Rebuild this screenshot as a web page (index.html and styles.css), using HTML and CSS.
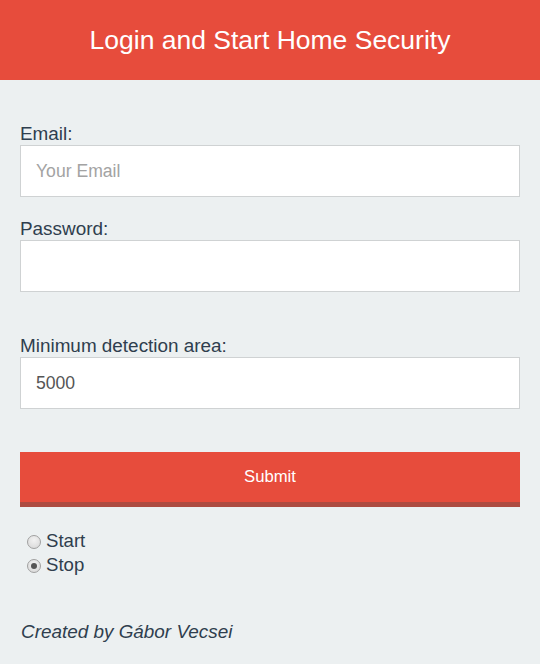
FILE: index.html
```html
<!DOCTYPE html>
<html lang="en">
<head>
<meta charset="utf-8">
<title>Login and Start Home Security</title>
<link rel="stylesheet" href="styles.css">
</head>
<body>
<header class="topbar">
  <h1 class="title">Login and Start Home Security</h1>
</header>
<main class="content">
  <form class="login-form">
    <label class="field-label" for="email">Email:</label>
    <input class="text-input gap-small" id="email" type="email" placeholder="Your Email">
    <label class="field-label" for="password">Password:</label>
    <input class="text-input gap-large" id="password" type="password">
    <label class="field-label" for="area">Minimum detection area:</label>
    <input class="text-input gap-large" id="area" type="text" value="5000">
    <button class="submit" type="button">Submit</button>
    <div class="radios">
      <label class="radio-row"><input class="radio" type="radio" name="mode" value="start"><span>Start</span></label>
      <label class="radio-row"><input class="radio" type="radio" name="mode" value="stop" checked><span>Stop</span></label>
    </div>
  </form>
  <p class="credit">Created by Gábor Vecsei</p>
</main>
</body>
</html>
```
FILE: styles.css
```css
html, body {
  margin: 0;
  padding: 0;
}
body {
  background: #ecf0f1;
  font-family: "Liberation Sans", Arial, sans-serif;
  color: #2f3e4e;
}
.topbar {
  background: #e74c3c;
  height: 80px;
  display: flex;
  align-items: center;
  justify-content: center;
}
.title {
  margin: 0;
  font-weight: normal;
  font-size: 26.5px;
  color: #ffffff;
}
.content {
  padding: 43px 20px 0;
}
.login-form {
  display: flex;
  flex-direction: column;
}
.field-label {
  display: block;
  font-size: 18.9px;
  line-height: 22px;
}
.text-input {
  box-sizing: border-box;
  width: 100%;
  height: 52px;
  margin: 0;
  padding: 0 15px;
  border: 1px solid #cfd2d3;
  border-radius: 0;
  background: #ffffff;
  font-family: "Liberation Sans", Arial, sans-serif;
  font-size: 17.6px;
  color: #555555;
  outline: none;
}
.text-input::placeholder {
  color: #a3a3a3;
}
.gap-small {
  margin-bottom: 21px;
}
.gap-large {
  margin-bottom: 43px;
}
.submit {
  box-sizing: border-box;
  width: 100%;
  height: 55px;
  margin: 0;
  border: none;
  border-bottom: 5px solid #ad4b41;
  background: #e74c3c;
  color: #ffffff;
  font-family: "Liberation Sans", Arial, sans-serif;
  font-size: 16.7px;
  padding: 0;
}
.radios {
  margin-top: 22px;
  display: flex;
  flex-direction: column;
}
.radio-row {
  display: flex;
  align-items: center;
  font-size: 18.6px;
  line-height: 24px;
  height: 24px;
}
.radio {
  appearance: none;
  -webkit-appearance: none;
  box-sizing: border-box;
  width: 14px;
  height: 14px;
  margin: 1px 5px 0 7px;
  border: 1px solid #a0a0a0;
  border-radius: 50%;
  background: radial-gradient(circle at 50% 35%, #f2f2f2 0%, #d6d6d6 100%);
  display: flex;
  align-items: center;
  justify-content: center;
}
.radio:checked::after {
  content: "";
  width: 6px;
  height: 6px;
  border-radius: 50%;
  background: #555555;
}
.credit {
  margin: 44px 0 0 1px;
  font-style: italic;
  font-size: 18.9px;
  line-height: 22px;
}
```
